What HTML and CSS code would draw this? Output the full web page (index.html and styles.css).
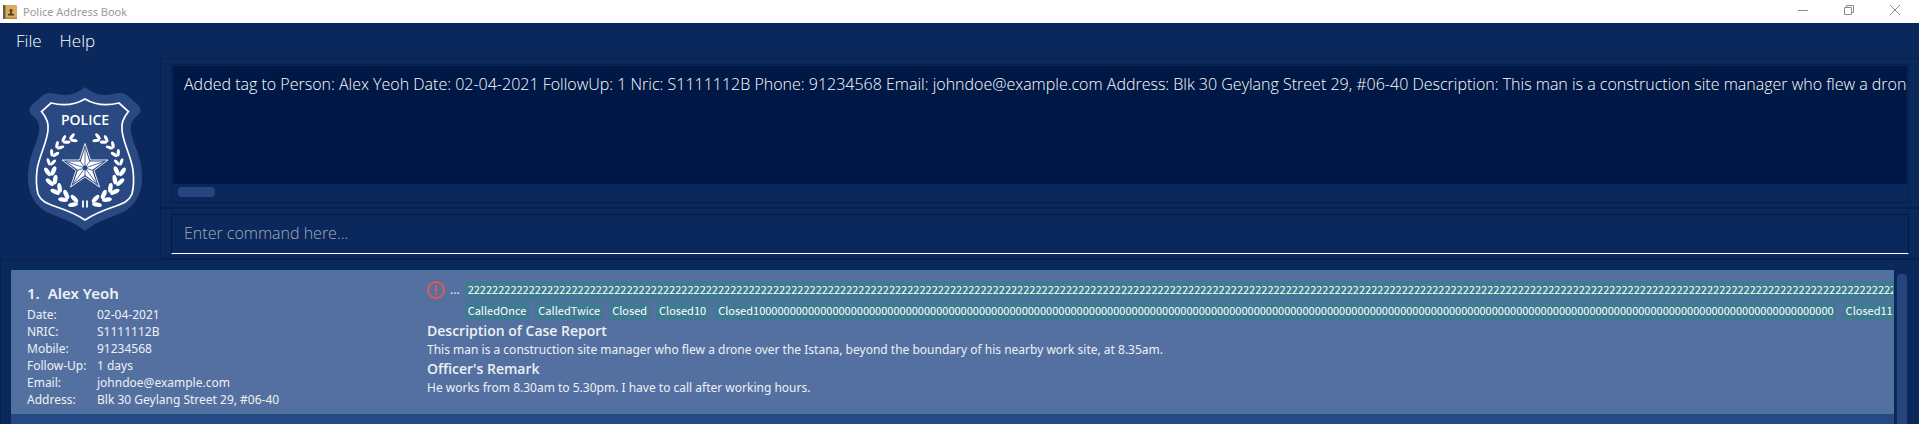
FILE: index.html
```
<!DOCTYPE html>
<html lang="en">
<head>
<meta charset="utf-8">
<title>Police Address Book</title>
<link rel="stylesheet" href="styles.css">
</head>
<body>
<div class="app">
  <header class="titlebar">
    <svg class="app-icon" width="14" height="14" viewBox="0 0 14 14" aria-hidden="true">
      <rect width="14" height="14" rx="1" fill="#d9ab5a"/>
      <rect width="2.500" height="14" fill="#6b5a4c"/>
      <rect x="3" y="12.500" width="11" height="1.500" fill="#b98a3c"/>
      <circle cx="8" cy="5.500" r="1.600" fill="#4a3f33"/>
      <path d="M5 10.500V9.300L7.200 8.300V6.500h1.600v1.800l2.200 1v1.200z" fill="#4a3f33"/>
    </svg>
    <h1 class="title">Police Address Book</h1>
    <div class="window-controls">
      <button class="window-button" aria-label="Minimize"><svg width="12" height="12" viewBox="0 0 12 12"><path d="M1 6.500h10"/></svg></button>
      <button class="window-button" aria-label="Restore"><svg width="12" height="12" viewBox="0 0 12 12"><path d="M1.500 3.500h7v7h-7zM3.500 3.500v-2h7v7h-2"/></svg></button>
      <button class="window-button" aria-label="Close"><svg width="12" height="12" viewBox="0 0 12 12"><path d="M1 1l10 10M11 1L1 11"/></svg></button>
    </div>
  </header>
  <nav class="menubar">
    <button class="menu">File</button>
    <button class="menu">Help</button>
  </nav>
  <section class="top">
    <div class="logo">
      <svg width="116" height="146" viewBox="0 0 116 146" role="img" aria-label="Police badge">
        <defs>
          <g id="big-leaves"><ellipse cx="61" cy="119.500" rx="5" ry="2.200" transform="rotate(24 61 119.500)"/><ellipse cx="61" cy="113.500" rx="5" ry="2.200" transform="rotate(-34 61 113.500)"/></g>
          <g id="small-leaves"><ellipse cx="60" cy="119" rx="3.800" ry="1.600" transform="rotate(26 60 119)"/><ellipse cx="60" cy="114.500" rx="3.800" ry="1.600" transform="rotate(-34 60 114.500)"/></g>
          <g id="branch" fill="#fff">
            <use href="#big-leaves" transform="rotate(-14 58 82)"/>
            <use href="#big-leaves" transform="rotate(-31 58 82)"/>
            <use href="#big-leaves" transform="rotate(-48 58 82)"/>
            <use href="#big-leaves" transform="rotate(-65 58 82)"/>
            <use href="#big-leaves" transform="rotate(-81 58 82)"/>
            <use href="#small-leaves" transform="rotate(-98 58 82)"/>
            <use href="#small-leaves" transform="rotate(-113 58 82)"/>
            <use href="#small-leaves" transform="rotate(-128 58 82)"/>
            <use href="#small-leaves" transform="rotate(-142 58 82)"/>
            <use href="#small-leaves" transform="rotate(-155 58 82) translate(0 -2)"/>
          </g>
        </defs>
        <path d="M58 0C64 5 71 8 78 8C84 8 88 6 93 6C97 6 99 7 102 10L111 18C115 22 114 26 110 29C105 33 103 38 104 44C105 53 110 62 113 73C115 82 116 92 114 101C111 114 104 122 92 127C79 132 67 136 58 144C49 136 37 132 24 127C12 122 5 114 2 101C0 92 1 82 3 73C6 62 11 53 12 44C13 38 11 33 6 29C2 26 1 22 5 18L14 10C17 7 19 6 23 6C28 6 32 8 38 8C45 8 52 5 58 0Z" fill="#2a4983"/>
        <path d="M58 12C68 18 80 19 92 16L101.500 24.500C96 31 94 36 95 43C96 56 104 69 106 83C107 92 107 99 105 107C102 114 97 116 89 119C77 123 67 127 58 133C49 127 39 123 27 119C19 116 14 114 11 107C9 99 9 92 10 83C12 69 20 56 21 43C22 36 20 31 14.500 24.500L24 16C36 19 48 18 58 12Z" fill="none" stroke="#fff" stroke-width="1.700"/>
        <text x="58" y="38" text-anchor="middle" class="badge-text">POLICE</text>
        <path d="M58 56.500L63.500 73H81L67 83.500L72.500 100L58 90L43.500 100L49 83.500L35 73H52.500Z" fill="none" stroke="#fff" stroke-width="0.900"/>
        <path d="M58 60.500L62.400 74.500H77L65 83L70 97L58 88L46 97L51 83L39 74.500H53.600Z" fill="#fff"/>
        <path d="M58 60V81L62.600 74.300M58 81L77 74.500M58 81L65.400 83.200M58 81L70 97M58 81V88.500M58 81L46 97M58 81L50.600 83.200M58 81L39 74.500M58 81L53.400 74.300" fill="none" stroke="#2a4983" stroke-width="0.800"/>
        <circle cx="58" cy="81" r="2.400" fill="#2a4983"/>
        <use href="#branch"/>
        <use href="#branch" transform="translate(116 0) scale(-1 1)"/>
        <path d="M56 113.500v7M60 113.500v7" stroke="#fff" stroke-width="1.800"/>
      </svg>
    </div>
    <div class="console">
      <div class="result-pane">
        <div class="result-box">
          <output class="result">Added tag to Person: Alex Yeoh Date: 02-04-2021 FollowUp: 1 Nric: S1111112B Phone: 91234568 Email: johndoe@example.com Address: Blk 30 Geylang Street 29, #06-40 Description: This man is a construction site manager who flew a drone</output>
          <div class="hscroll"><div class="hthumb"></div></div>
        </div>
      </div>
      <div class="command-pane">
        <input class="command" type="text" placeholder="Enter command here..." aria-label="Command">
      </div>
    </div>
  </section>
  <main class="list-pane">
    <div class="list">
      <article class="card">
        <section class="person">
          <h2 class="name"><span>1.</span><span>Alex Yeoh</span></h2>
          <dl class="details">
            <dt>Date:</dt><dd>02-04-2021</dd>
            <dt>NRIC:</dt><dd>S1111112B</dd>
            <dt>Mobile:</dt><dd>91234568</dd>
            <dt>Follow-Up:</dt><dd>1 days</dd>
            <dt>Email:</dt><dd>johndoe@example.com</dd>
            <dt>Address:</dt><dd>Blk 30 Geylang Street 29, #06-40</dd>
          </dl>
        </section>
        <section class="case">
          <div class="tagline">
            <svg class="alert" width="18" height="18" viewBox="0 0 18 18" aria-hidden="true"><circle cx="9" cy="9" r="8"/><path d="M9 4v6.500M9 12.200v1.800"/></svg>
            <span class="dots">...</span>
            <div class="tags">
              <div class="tagrow"><span class="tag">22222222222222222222222222222222222222222222222222222222222222222222222222222222222222222222222222222222222222222222222222222222222222222222222222222222222222222222222222222222222222222222222222222222222222222222222222222222222222222222222222222222222222222222</span></div>
              <div class="tagrow"><span class="tag">CalledOnce</span><span class="tag">CalledTwice</span><span class="tag">Closed</span><span class="tag">Closed10</span><span class="tag">Closed100000000000000000000000000000000000000000000000000000000000000000000000000000000000000000000000000000000000000000000000000000000000000000000000000000000000000000000000000000000</span><span class="tag">Closed11</span></div>
            </div>
          </div>
          <h3 class="heading">Description of Case Report</h3>
          <p class="text">This man is a construction site manager who flew a drone over the Istana, beyond the boundary of his nearby work site, at 8.35am.</p>
          <h3 class="heading">Officer's Remark</h3>
          <p class="text">He works from 8.30am to 5.30pm. I have to call after working hours.</p>
        </section>
      </article>
      <div class="next-card"></div>
    </div>
    <div class="vscroll"><div class="vthumb"></div></div>
  </main>
</div>
</body>
</html>
```
FILE: styles.css
```
* { box-sizing: border-box; margin: 0; padding: 0; }
body { font-family: "Noto Sans", "Open Sans", sans-serif; background: #0a285c; color: #fff; }
button { background: none; border: 0; color: inherit; font: inherit; }
.app { display: flex; flex-direction: column; height: 100vh; overflow: hidden; }
.titlebar { display: flex; align-items: center; height: 23px; padding-left: 3px; gap: 6px; background: #fff; flex: none; }
.title { font-size: 11px; font-weight: 400; color: #999; flex: 1; }
.window-controls { display: flex; gap: 34px; padding: 0 18px 3px 0; }
.window-button { display: flex; }
.window-button svg { fill: none; stroke: #8a8a8a; stroke-width: 1; }
.menubar { display: flex; gap: 18px; height: 35px; padding: 0 16px; flex: none; font-family: "Open Sans", sans-serif; font-size: 17px; font-weight: 300; }
.top { display: flex; flex: none; }
.logo { width: 160px; display: flex; justify-content: center; align-items: center; padding: 2px 0 0 10px; }
.badge-text { font: 600 14px "Open Sans", sans-serif; fill: #fff; }
.console { flex: 1; min-width: 0; border-left: 1px solid #061f4d; }
.result-pane { border-top: 1px solid #061f4d; border-bottom: 1px solid #061f4d; padding: 5px 10px 4px; }
.result-box { border: 1px solid #061f4d; padding: 1px; }
.result { display: block; height: 118px; padding: 6px 11px; background: #001845; font-family: "Open Sans", sans-serif; font-size: 16px; line-height: 24px; font-weight: 300; white-space: nowrap; overflow: hidden; }
.hscroll { padding: 3px 5px; height: 17px; }
.hthumb { width: 37px; height: 10px; border-radius: 4px; background: #26457d; }
.command-pane { border-top: 1px solid #061f4d; border-bottom: 1px solid #061f4d; padding: 5px 10px 4px; }
.command { display: block; width: 100%; height: 40px; padding: 0 12px 2px; background: none; border: 1px solid #001845; border-bottom-color: #fff; color: #fff; font: 300 16px "Open Sans", sans-serif; outline: 0; }
.command::placeholder { color: #a4acba; opacity: 1; }
.list-pane { display: flex; flex: 1; min-height: 0; padding: 10px 12px 0 10px; border: 1px solid #061f4d; border-bottom: 0; border-right: 0; gap: 3px; }
.list { display: flex; flex-direction: column; flex: 1; min-width: 0; }
.card { display: flex; border: 1px solid #3e7b91; background: #5470a0; padding: 10px 0 5px 15px; color: #eef1f6; overflow: hidden; }
.person { width: 400px; flex: none; }
.name { display: flex; gap: 8px; font-size: 15px; font-weight: 600; line-height: 24px; padding-bottom: 1px; }
.details { display: grid; grid-template-columns: 70px 1fr; font-size: 12px; line-height: 17px; }
.case { flex: 1; min-width: 0; }
.tagline { display: flex; gap: 5px; }
.alert { flex: none; fill: none; stroke: #e05a50; stroke-width: 2; }
.dots { font-size: 12px; line-height: 18px; }
.tags { display: flex; flex-direction: column; gap: 3px; }
.tagrow { display: flex; gap: 6px; }
.tag { flex: none; padding: 0 3px 2px; border-radius: 2px; background: #3e7b91; color: #fff; font-family: "Noto Sans CJK JP", sans-serif; font-size: 11px; line-height: 16px; white-space: nowrap; }
.heading { font-family: "Open Sans", sans-serif; font-size: 14px; font-weight: 600; line-height: 22px; }
.text { font-size: 12px; line-height: 16px; }
.next-card { flex: 1; background: #264985; }
.vscroll { width: 10px; padding-top: 4px; }
.vthumb { height: 100%; border-radius: 4px 4px 0 0; background: #26457d; }
```
